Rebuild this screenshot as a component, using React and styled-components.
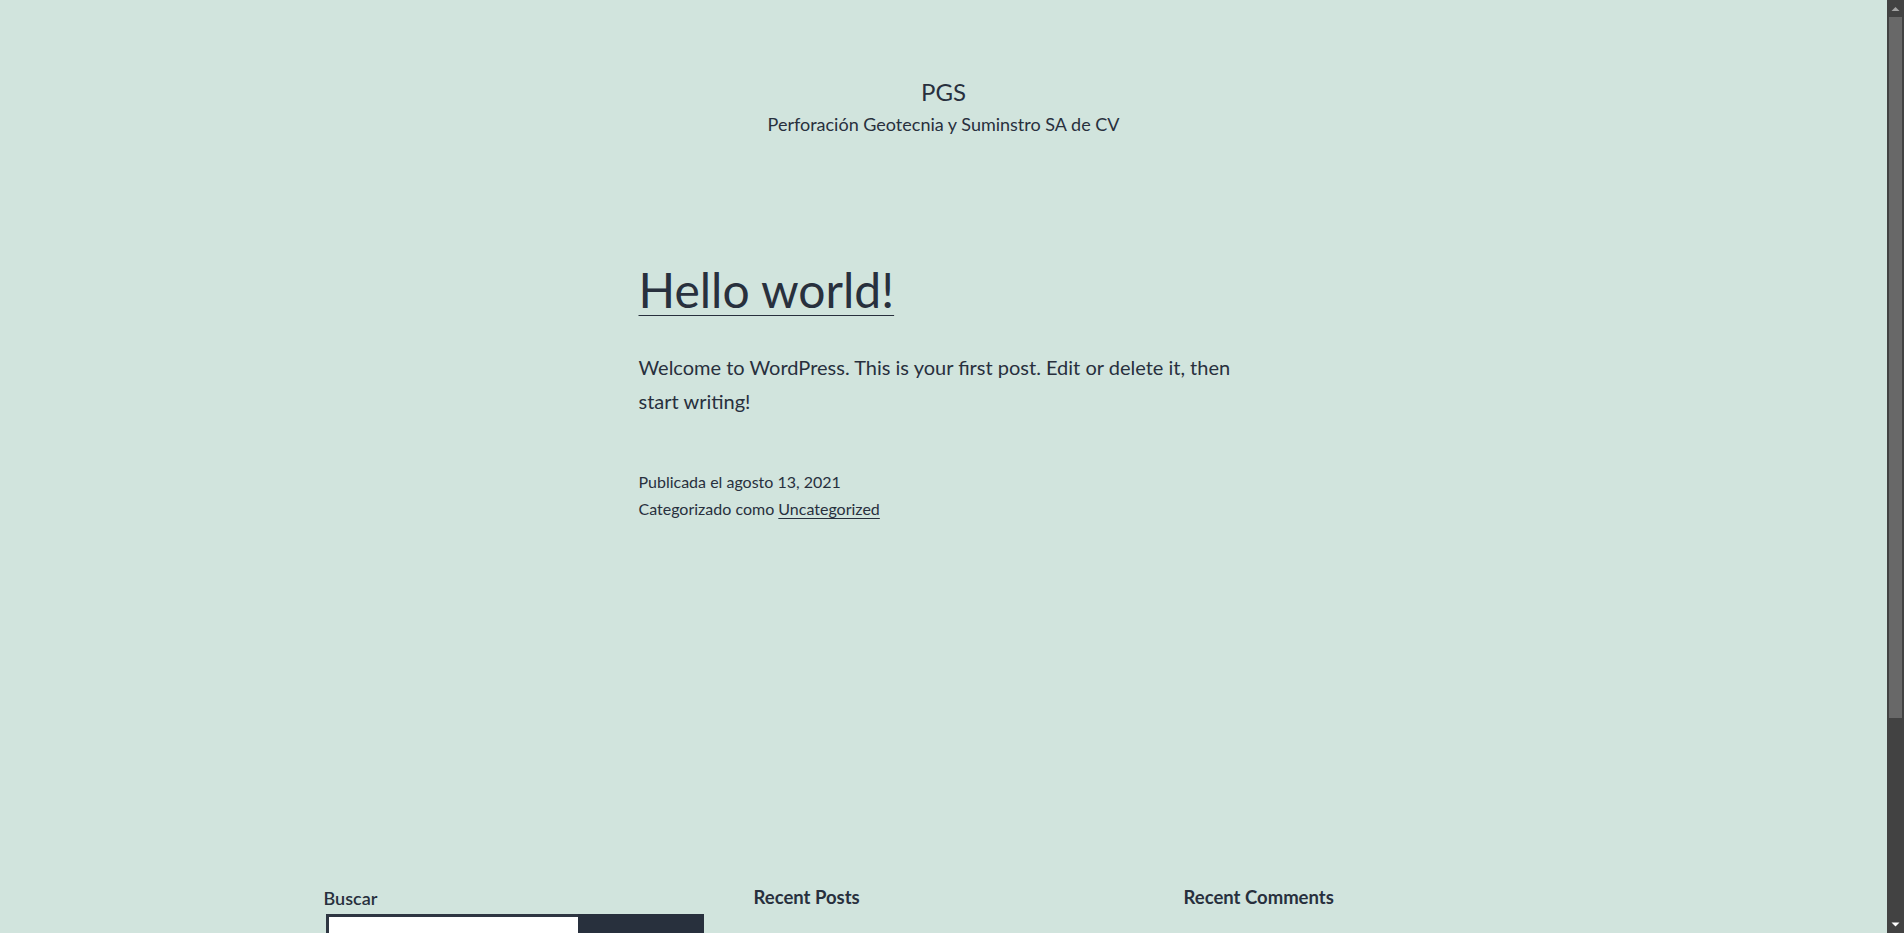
import React from 'react';
import styled, { createGlobalStyle } from 'styled-components';

const GlobalStyle = createGlobalStyle`
  html, body { height: 100%; overflow: hidden; }
  body {
    margin: 0;
    background: #d1e4dd;
    color: #28303d;
    font-family: Lato, "Noto Sans", sans-serif;
    font-size: 20px;
    line-height: 1.7;
  }
`;

const Viewport = styled.div`
  display: flex;
  height: 100vh;
  overflow: hidden;
`;

const DocumentArea = styled.div`
  flex: 1;
  min-width: 0;
  height: 100%;
  overflow: hidden;
`;

const Page = styled.div`
  min-height: 1196px;
  display: flex;
  flex-direction: column;
`;

/* ---------- window scrollbar ---------- */
const Scrollbar = styled.div`
  width: 17px;
  flex-shrink: 0;
  display: flex;
  flex-direction: column;
  background: #424242;
`;

const ScrollButton = styled.div`
  height: 17px;
  flex-shrink: 0;
  display: flex;
`;

const Track = styled.div`
  flex: 1;
  display: flex;
  flex-direction: column;
`;

const Thumb = styled.div`
  height: ${(p) => p.$size}px;
  margin: 0 2px;
  background: #686868;
`;

/* ---------- header ---------- */
const Header = styled.header`
  padding-top: 76px;
  text-align: center;
`;

const SiteTitle = styled.h1`
  margin: 0;
  font-size: 24px;
  font-weight: 400;
  line-height: 1.3;
`;

const Tagline = styled.p`
  margin: 5px 0 0;
  font-size: 18px;
  line-height: 1.4;
`;

/* ---------- post ---------- */
const Main = styled.main`
  width: 610px;
  margin: 122px auto 0;
`;

const EntryTitle = styled.h2`
  margin: 0;
  font-size: 48px;
  font-weight: 400;
  line-height: 1.3;
`;

const TextLink = styled.a`
  color: inherit;
  text-decoration: underline;
  text-decoration-thickness: 1px;
  text-underline-offset: ${(p) => p.$offset || 3}px;
`;

const EntryContent = styled.p`
  margin: 28px 0 0;
`;

const EntryMeta = styled.div`
  margin-top: 50px;
  font-size: 16px;
  line-height: 1.7;
`;

const MetaLine = styled.span`
  display: block;
`;

/* ---------- widgets ---------- */
const WidgetArea = styled.aside`
  width: 1240px;
  margin: 361px auto 0;
  display: grid;
  grid-template-columns: repeat(3, 1fr);
  column-gap: 50px;
  align-items: start;
`;

const Widget = styled.section`
  display: flex;
  flex-direction: column;
`;

const SearchLabel = styled.label`
  font-size: 18px;
  font-weight: 600;
  line-height: 1.7;
`;

const SearchForm = styled.form`
  display: flex;
  margin-left: 2px;
`;

const SearchInput = styled.input`
  flex: 1;
  min-width: 0;
  box-sizing: border-box;
  height: 57px;
  border: 3px solid #2e3642;
  border-right-width: 0;
  background: #fff;
  padding: 10px;
  font: 400 18px Lato, "Noto Sans", sans-serif;
  color: #28303d;
  outline: none;
`;

const SearchButton = styled.button`
  width: 126px;
  height: 57px;
  border: 3px solid #28303d;
  background: #28303d;
  color: #d1e4dd;
  font: 500 20px Lato, "Noto Sans", sans-serif;
  cursor: pointer;
`;

const WidgetTitle = styled.h2`
  margin: 2px 0 0;
  font-size: 18.5px;
  font-weight: 700;
  line-height: 1.3;
`;

const WidgetList = styled.ul`
  margin: 20px 0 0;
  padding: 0;
  list-style: none;
  font-size: 20px;
`;

const SiteFooter = styled.footer`
  width: 1240px;
  margin: auto auto 0;
  padding: 40px 0 50px;
  display: flex;
  justify-content: space-between;
  font-size: 16px;
`;

function Arrow({ up, color }) {
  return (
    <svg width="17" height="17" viewBox="0 0 17 17" aria-hidden="true">
      {up ? (
        <polygon points="4.5,11 8.5,7 12.5,11" fill={color} />
      ) : (
        <polygon points="4.5,6.5 12.5,6.5 8.5,10.5" fill={color} />
      )}
    </svg>
  );
}

export default function App() {
  return (
    <>
      <GlobalStyle />
      <Viewport>
        <DocumentArea>
          <Page>
            <Header>
              <SiteTitle>PGS</SiteTitle>
              <Tagline>Perforación Geotecnia y Suminstro SA de CV</Tagline>
            </Header>

            <Main>
              <article>
                <EntryTitle>
                  <TextLink href="#" $offset={7}>Hello world!</TextLink>
                </EntryTitle>
                <EntryContent>
                  Welcome to WordPress. This is your first post. Edit or delete it, then start writing!
                </EntryContent>
                <EntryMeta>
                  <MetaLine>Publicada el agosto 13, 2021</MetaLine>
                  <MetaLine>
                    Categorizado como <TextLink href="#">Uncategorized</TextLink>
                  </MetaLine>
                </EntryMeta>
              </article>
            </Main>

            <WidgetArea>
              <Widget>
                <SearchLabel htmlFor="search">Buscar</SearchLabel>
                <SearchForm onSubmit={(e) => e.preventDefault()}>
                  <SearchInput id="search" type="search" />
                  <SearchButton type="submit">Buscar</SearchButton>
                </SearchForm>
              </Widget>
              <Widget>
                <WidgetTitle>Recent Posts</WidgetTitle>
                <WidgetList>
                  <li><TextLink href="#">Hello world!</TextLink></li>
                </WidgetList>
              </Widget>
              <Widget>
                <WidgetTitle>Recent Comments</WidgetTitle>
                <WidgetList>
                  <li>
                    <TextLink href="#">A WordPress Commenter</TextLink> en{' '}
                    <TextLink href="#">Hello world!</TextLink>
                  </li>
                </WidgetList>
              </Widget>
            </WidgetArea>

            <SiteFooter>
              <span>PGS</span>
              <span>Funciona gracias a WordPress.</span>
            </SiteFooter>
          </Page>
        </DocumentArea>

        <Scrollbar>
          <ScrollButton>
            <Arrow up color="#a3a3a3" />
          </ScrollButton>
          <Track>
            <Thumb $size={701} />
          </Track>
          <ScrollButton>
            <Arrow color="#ffffff" />
          </ScrollButton>
        </Scrollbar>
      </Viewport>
    </>
  );
}
